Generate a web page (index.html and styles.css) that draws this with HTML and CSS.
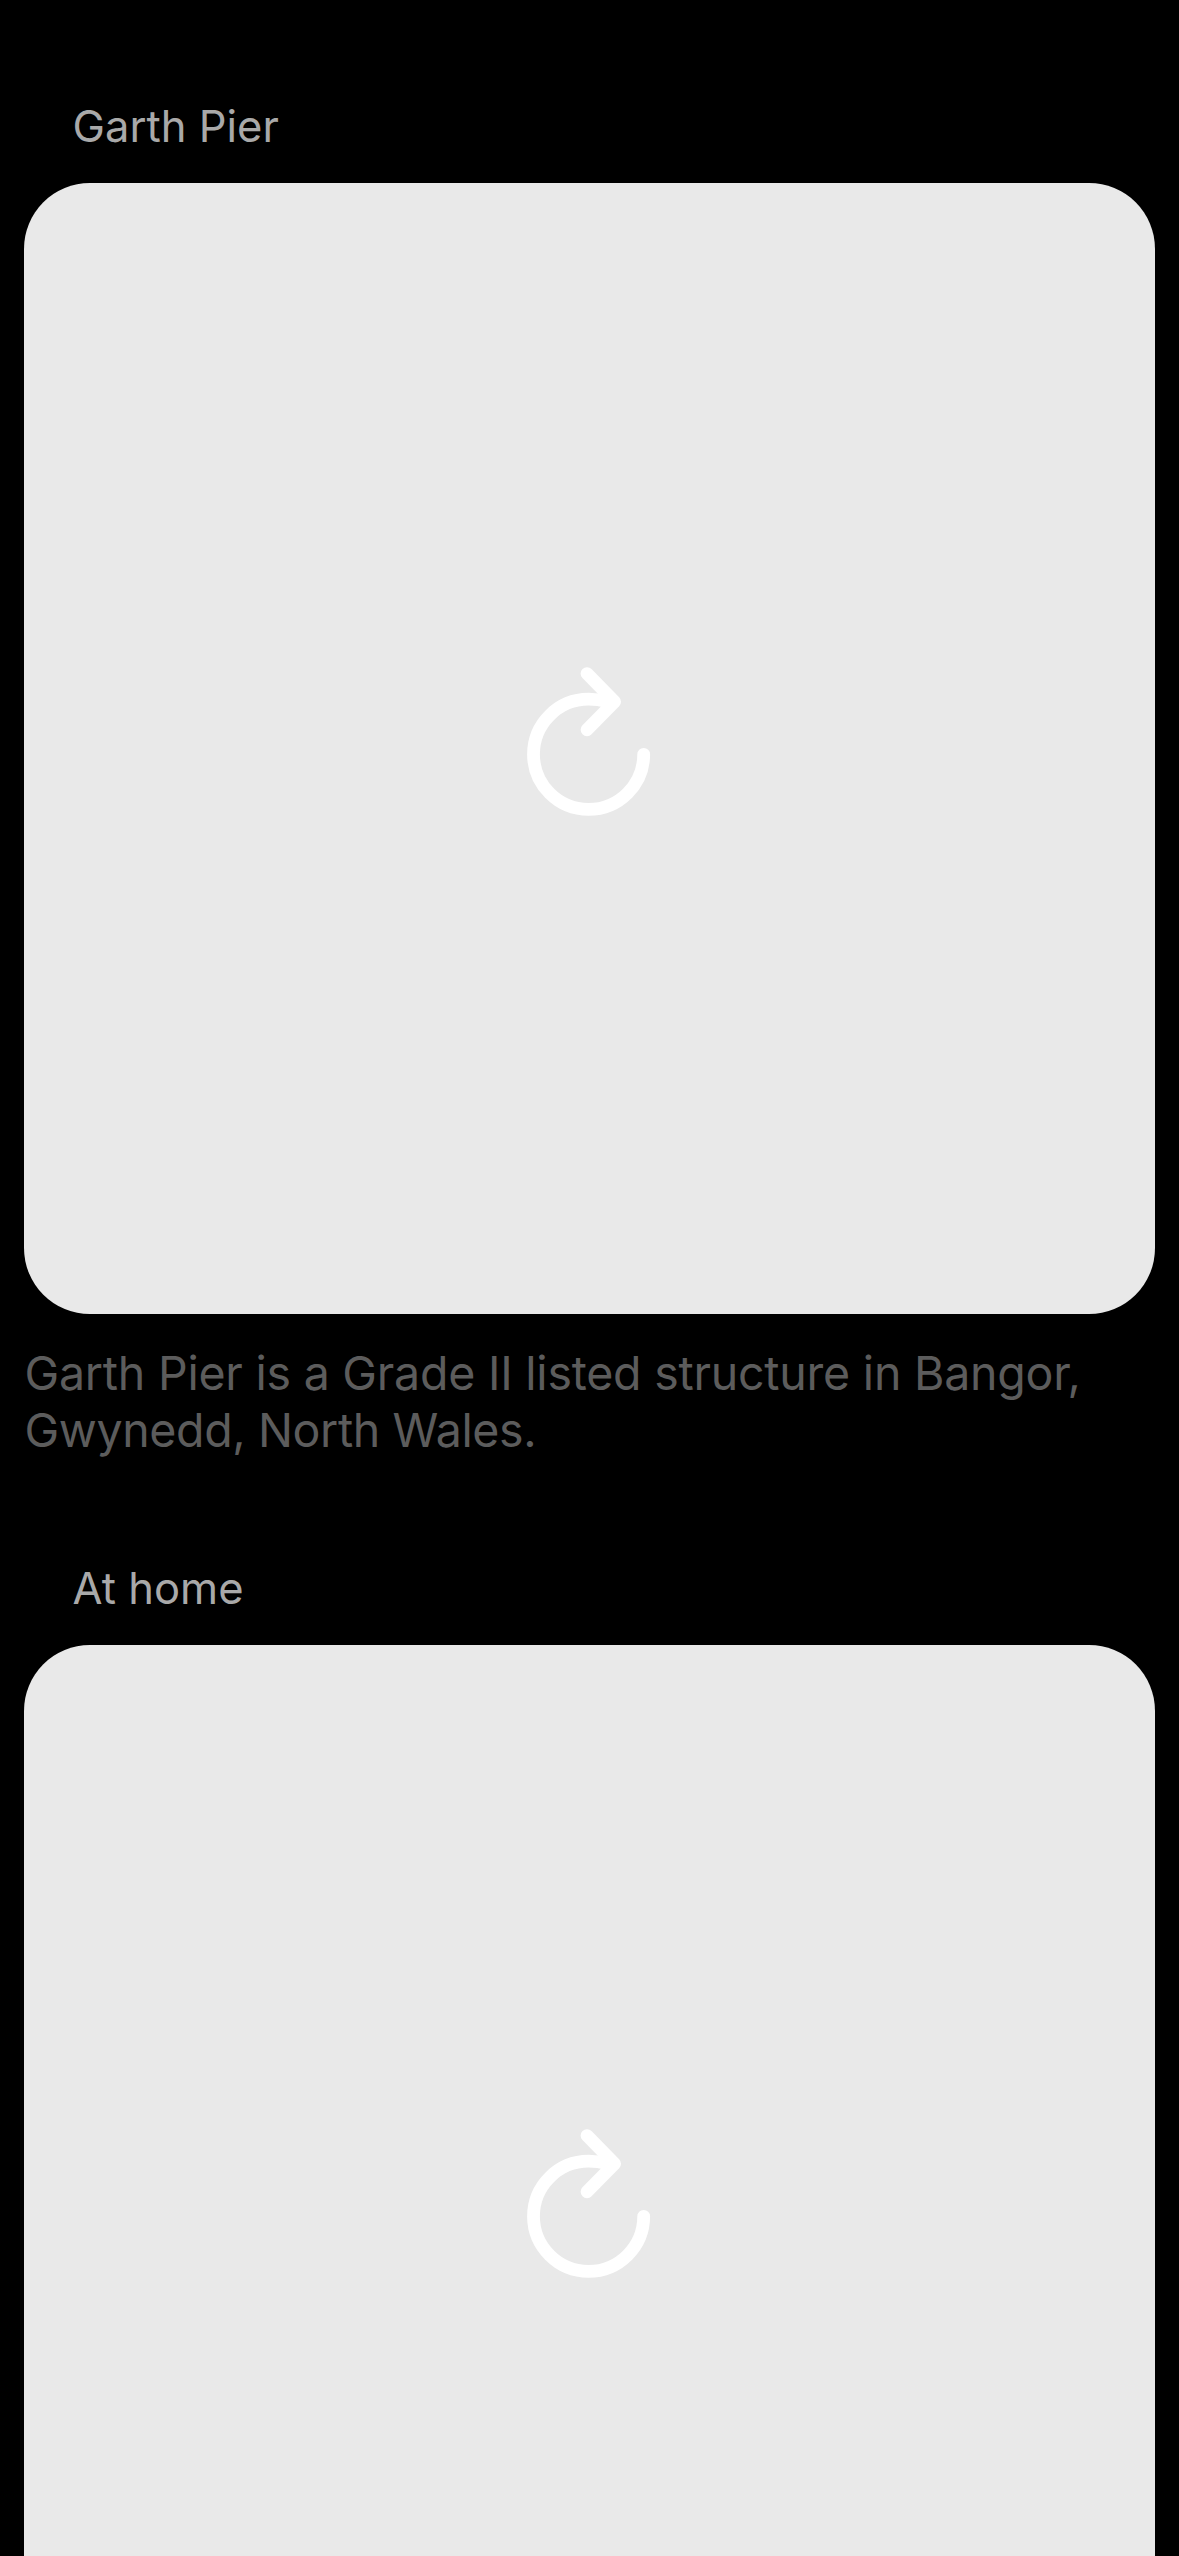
FILE: index.html
```html
<!DOCTYPE html>
<html lang="en">
<head>
<meta charset="utf-8">
<title>Gallery</title>
<link rel="stylesheet" href="styles.css">
</head>
<body>
<main class="feed">
  <article class="entry">
    <h2 class="entry-title">Garth Pier</h2>
    <div class="photo">
      <svg class="reload" viewBox="0 0 180 180" fill="none" stroke="#fff" stroke-width="12.8" stroke-linecap="round" stroke-linejoin="round" aria-label="Reload">
        <path d="M143.7 104.3A55.1 55.1 0 1 1 88.5 49.2Q98 49.2 107 51.6"/>
        <path d="M87 23.6L114.6 51.7L87 79.8"/>
      </svg>
    </div>
    <p class="caption">Garth Pier is a Grade II listed structure in Bangor,<br><span class="caption-end">Gwynedd, North Wales.</span></p>
  </article>
  <article class="entry">
    <h2 class="entry-title">At home</h2>
    <div class="photo">
      <svg class="reload" viewBox="0 0 180 180" fill="none" stroke="#fff" stroke-width="12.8" stroke-linecap="round" stroke-linejoin="round" aria-label="Reload">
        <path d="M143.7 104.3A55.1 55.1 0 1 1 88.5 49.2Q98 49.2 107 51.6"/>
        <path d="M87 23.6L114.6 51.7L87 79.8"/>
      </svg>
    </div>
  </article>
</main>
</body>
</html>
```
FILE: styles.css
```css
body {
  margin: 0;
  background: #000;
  font-family: Inter, "Liberation Sans", sans-serif;
}

.feed {
  box-sizing: border-box;
  height: 2556px;
  overflow: hidden;
  padding: 99px 24px 0;
}

.entry-title {
  margin: 0;
  padding: 0 48px 30px 48.5px;
  font-size: 43.5px;
  font-weight: 400;
  line-height: 54px;
  letter-spacing: 0.02px;
  color: #a9a9a9;
}

.photo {
  display: flex;
  align-items: center;
  justify-content: center;
  height: 1131px;
  border-radius: 66px;
  background: #e9e9e9;
}

.reload {
  width: 180px;
  height: 180px;
  margin: -17px 0 0 1px;
}

.caption {
  margin: 0;
  padding: 31px 0 102px 0.5px;
  font-size: 46.5px;
  line-height: 57px;
  letter-spacing: -0.23px;
  white-space: nowrap;
  color: #5c5c5c;
}

.caption-end {
  letter-spacing: -0.38px;
}
```
